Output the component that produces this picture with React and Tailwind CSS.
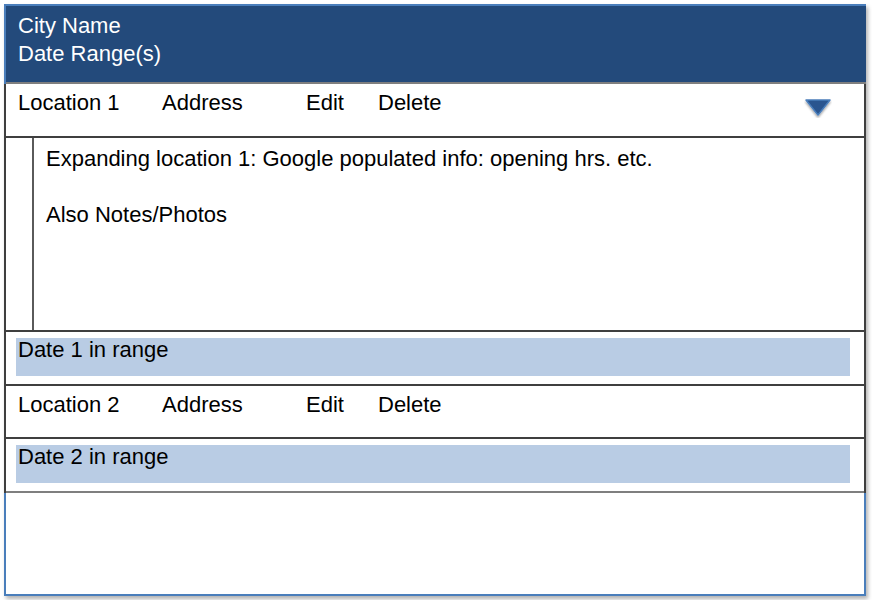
import React from 'react';

const rowLine = 'border-b-2 border-[#3f3f3f]';

function LocationRow({ name, open, h }) {
	return (
		<div className={`${h} flex items-start pl-[12px] pt-[5px] leading-[28px] ${rowLine}`}>
			<span className="w-[144px]">{name}</span>
			<span className="w-[144px]">Address</span>
			<span className="w-[72px]">Edit</span>
			<span>Delete</span>
			{open && (
				<svg className="ml-auto mr-[32px] mt-[9px]" width="28" height="20" viewBox="0 0 28 20">
					<defs>
						<filter id="sh" x="-30%" y="-30%" width="160%" height="180%">
							<feDropShadow dx="0" dy="2" stdDeviation="1.2" floodColor="#000" floodOpacity="0.35" />
						</filter>
					</defs>
					<polygon points="2,2 26,2 14,17" fill="#2a558f" stroke="#4a7ebb" strokeWidth="1.5" strokeLinejoin="round" filter="url(#sh)" />
				</svg>
			)}
		</div>
	);
}

function DateRow({ label, last }) {
	return (
		<div className={`h-[54px] ${last ? 'border-b-2 border-[#7f7f7f]' : rowLine} pt-[6px] pl-[10px] pr-[14px]`}>
			<div className="h-[38px] bg-[#b9cce4] pl-[2px] pt-[1px] leading-[22px]">{label}</div>
		</div>
	);
}

export default function App() {
	return (
		<div className="w-[872px] h-[600px] bg-white pt-[4px] pl-[4px] font-['Liberation_Sans',Arial,sans-serif] text-[22px] text-black">
			<div className="w-[862px] h-[592px] border-2 border-[#4a7ebb] shadow-[2px_3px_4px_rgba(0,0,0,0.3)] flex flex-col">
				<div className="h-[78px] shrink-0 bg-[#234a7b] text-white pl-[12px] pt-[6px] leading-[28px] border-b-2 border-[#7f7f7f] -mr-[2px]">
					<div>City Name</div>
					<div>Date Range(s)</div>
				</div>
				<div className="-mx-[2px] border-x-2 border-l-[#3f3f3f] border-r-[#3f3f3f]">
					<LocationRow name="Location 1" open h="h-[54px]" />
					<div className={`h-[194px] flex ${rowLine}`}>
						<div className="w-[26px]" />
						<div className="flex-1 border-l-2 border-[#5a5a5a] pl-[12px] pt-[7px] leading-[28px]">
							<div>Expanding location 1: Google populated info: opening hrs. etc.</div>
							<div className="mt-[28px]">Also Notes/Photos</div>
						</div>
					</div>
					<DateRow label="Date 1 in range" />
					<LocationRow name="Location 2" h="h-[53px]" />
					<DateRow label="Date 2 in range" last />
				</div>
			</div>
		</div>
	);
}
